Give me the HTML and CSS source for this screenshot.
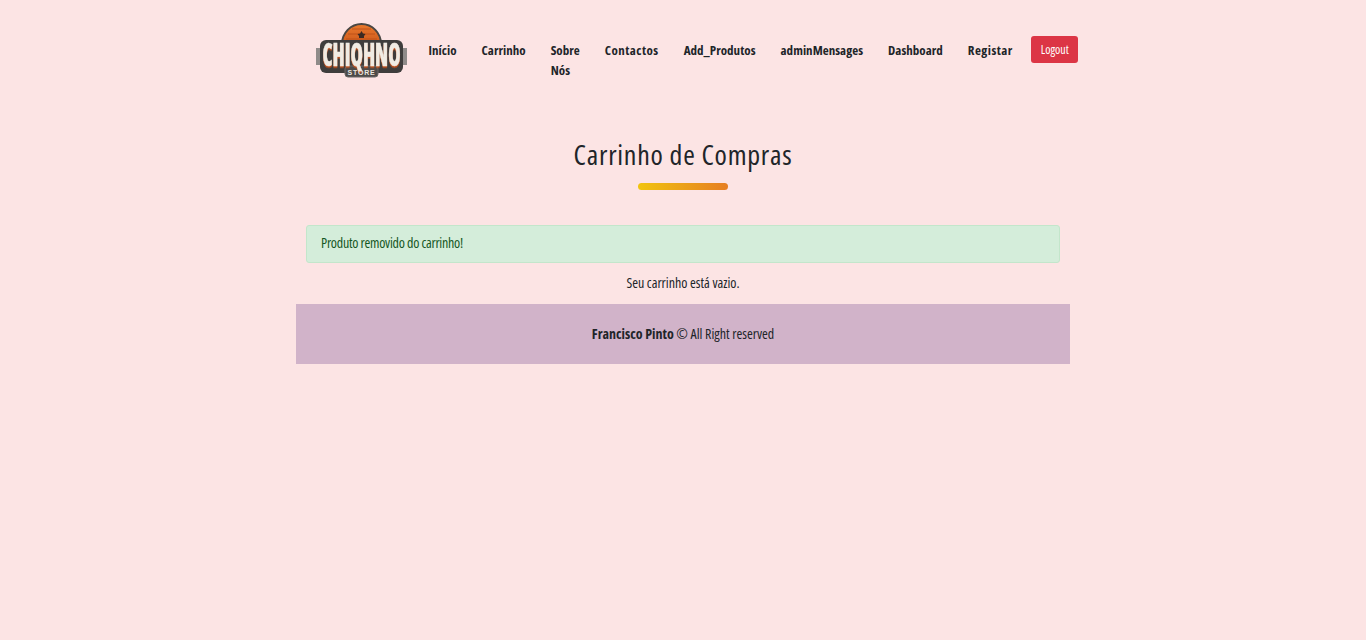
FILE: index.html
```html
<!DOCTYPE html>
<html lang="pt">
<head>
  <meta charset="UTF-8" />
  <meta name="viewport" content="width=device-width, initial-scale=1.0"/>
  <title>Carrinho de Compras</title>
  <link rel="stylesheet" href="styles.css">
</head>
<body>
  <div class="page">
    <nav class="navbar">
      <a class="logo" href="#">
        <svg width="92" height="60" viewBox="0 0 92 60">
          <defs>
            <linearGradient id="dome" x1="0" y1="0" x2="0" y2="1">
              <stop offset="0" stop-color="#e9782c"/>
              <stop offset="1" stop-color="#cf5a1c"/>
            </linearGradient>
          </defs>
          <!-- side bars -->
          <rect x="0" y="28" width="91" height="17" fill="#8f8b89"/>
          <!-- dome -->
          <path d="M26 24a19.500 20 0 0 1 39 0z" fill="url(#dome)" stroke="#4a4643" stroke-width="2"/>
          <path d="M36 9h19M32 14h27M30 19h31" stroke="#b84c16" stroke-width="0.8"/>
          <path d="M45.500 11l1.500 2.500 2.500 0.500-1.500 2v2h-5v-2l-1.500-2 2.500-0.500z" fill="#3c2a22"/>
          <!-- plate and store tag -->
          <rect x="4" y="20" width="83" height="33" rx="6" fill="#3f3d3c"/>
          <rect x="29" y="46" width="33" height="11" rx="3" fill="#4d4a49" stroke="#6a6766" stroke-width="1"/>
          <text class="logo-name" transform="translate(45.500 46) scale(1 1.6)" text-anchor="middle">CHIQHNO</text>
          <text class="logo-store" x="45.500" y="55" text-anchor="middle">STORE</text>
        </svg>
      </a>
      <ul class="nav-links">
        <li><a href="#">Início</a></li>
        <li><a href="#">Carrinho</a></li>
        <li class="wrap"><a href="#">Sobre Nós</a></li>
        <li class="spaced"><a href="#">Contactos</a></li>
        <li><a href="#">Add_Produtos</a></li>
        <li><a href="#">adminMensages</a></li>
        <li><a href="#">Dashboard</a></li>
        <li class="spaced"><a href="#">Registar</a></li>
      </ul>
      <a class="btn-logout" href="#">Logout</a>
    </nav>

    <main class="cart">
      <h2 class="cart-title">Carrinho de Compras</h2>
      <div class="title-bar"></div>
      <div class="alert-success">Produto removido do carrinho!</div>
      <p class="empty">Seu carrinho está vazio.</p>
    </main>

    <footer class="footer">
      <p><strong>Francisco Pinto</strong> © All Right reserved</p>
    </footer>
  </div>
</body>
</html>
```

FILE: styles.css
```css
* {
  box-sizing: border-box;
}

body {
  margin: 0;
  font-family: 'Open Sans', sans-serif;
  font-stretch: 75%;
  font-size: 14px;
  line-height: 20px;
  color: #212529;
  background-color: #fce4e4;
}

.page {
  width: 774px;
  margin: 0 auto;
}

.navbar {
  display: flex;
  align-items: flex-start;
  height: 104px;
  padding: 20px 0 0 20px;
}

.logo {
  display: block;
  width: 100px;
  height: 60px;
  flex-shrink: 0;
}

.nav-links {
  display: flex;
  list-style: none;
  margin: 0;
  padding: 0;
  flex-shrink: 0;
  font-size: 13px;
  letter-spacing: 0.03px;
}

.nav-links li {
  padding: 20px 12.5px 0;
  white-space: nowrap;
}

.nav-links li.wrap {
  width: min-content;
  white-space: normal;
}

.nav-links li.spaced {
  letter-spacing: 0.45px;
}

.nav-links a {
  color: #212529;
  font-weight: bold;
  text-decoration: none;
}

.btn-logout {
  flex-shrink: 0;
  height: 27px;
  margin-top: 16px;
  margin-left: 6px;
  padding: 4px 9.5px;
  font-size: 12px;
  line-height: 19px;
  color: #fff;
  text-decoration: none;
  background-color: #dc3545;
  border-radius: 3px;
}

.logo-name {
  font-family: 'Open Sans', sans-serif;
  font-stretch: 75%;
  font-weight: 800;
  font-size: 20px;
  fill: #f0ebe3;
  stroke: #f0ebe3;
  stroke-width: 0.3px;
  filter: drop-shadow(0 1px 0 #c0501c);
}

.logo-store {
  font-family: 'Liberation Sans', sans-serif;
  font-weight: bold;
  font-size: 7px;
  letter-spacing: 0.8px;
  fill: #e8e4df;
}

.cart {
  padding: 0 10px;
}

.cart-title {
  margin: 23px 0 2px;
  font-size: 28px;
  line-height: 54px;
  font-weight: normal;
  letter-spacing: 0.75px;
  text-align: center;
}

.title-bar {
  width: 90px;
  height: 7px;
  margin: 0 auto 35px;
  border-radius: 4px;
  background: linear-gradient(to right, #f1c40f, #e67e22);
}

.alert-success {
  height: 38px;
  padding: 7px 14px;
  letter-spacing: -0.25px;
  color: #155724;
  background-color: #d4edda;
  border: 1px solid #c3e6cb;
  border-radius: 3px;
}

.empty {
  margin: 10px 0 0;
  padding-bottom: 11px;
  text-align: center;
}

.footer {
  height: 60px;
  padding-top: 20px;
  text-align: center;
  background-color: #d1b3c9;
}

.footer p {
  margin: 0;
}
```
